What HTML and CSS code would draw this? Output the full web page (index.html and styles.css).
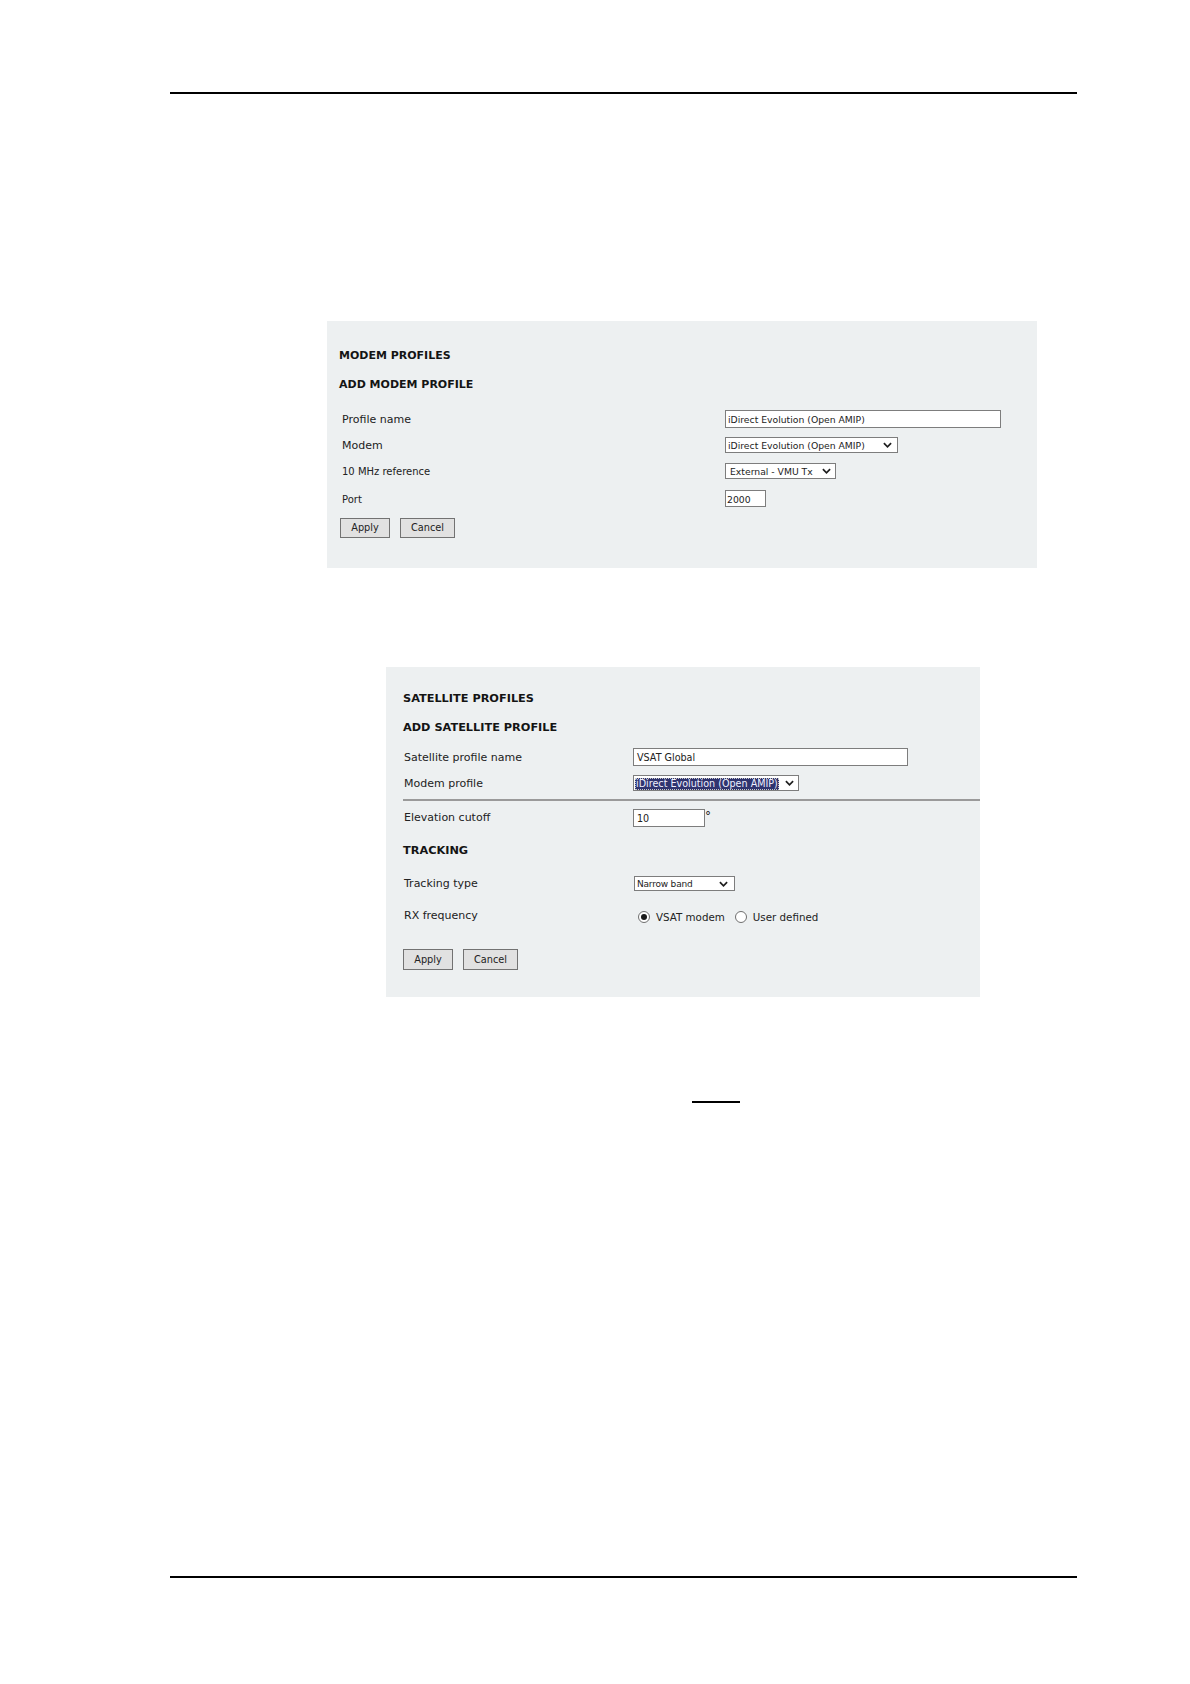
FILE: index.html
```html
<!DOCTYPE html>
<html>
<head>
<meta charset="utf-8">
<title>Modem and satellite profiles</title>
<link rel="stylesheet" href="styles.css">
</head>
<body>
<div class="page">
  <div class="rule"></div>

  <section class="panel modem">
    <h2 class="h-main">MODEM PROFILES</h2>
    <h3 class="h-sub">ADD MODEM PROFILE</h3>
    <div class="rows">
      <div class="row r1">
        <div class="label">Profile name</div>
        <div class="input w-profile">iDirect Evolution (Open AMIP)</div>
      </div>
      <div class="row r2">
        <div class="label">Modem</div>
        <div class="select w-modem"><span class="val">iDirect Evolution (Open AMIP)</span><svg class="chev" viewBox="0 0 10 6"><path d="M1 1 L5 5 L9 1"/></svg></div>
      </div>
      <div class="row r3">
        <div class="label small">10 MHz reference</div>
        <div class="select w-ref"><span class="val">External - VMU Tx</span><svg class="chev" viewBox="0 0 10 6"><path d="M1 1 L5 5 L9 1"/></svg></div>
      </div>
      <div class="row r4">
        <div class="label small">Port</div>
        <div class="input w-port">2000</div>
      </div>
    </div>
    <div class="buttons">
      <div class="btn b-apply">Apply</div>
      <div class="btn b-cancel">Cancel</div>
    </div>
  </section>

  <section class="panel sat">
    <h2 class="h-sat">SATELLITE PROFILES</h2>
    <h3 class="h-sat sub">ADD SATELLITE PROFILE</h3>
    <div class="srows">
      <div class="row s1">
        <div class="slabel">Satellite profile name</div>
        <div class="input w-satname sinput">VSAT Global</div>
      </div>
      <div class="row s1">
        <div class="slabel">Modem profile</div>
        <div class="select w-mprof"><span class="hl">iDirect Evolution (Open AMIP)</span><svg class="chev" viewBox="0 0 10 6"><path d="M1 1 L5 5 L9 1"/></svg></div>
      </div>
    </div>
    <div class="sep"></div>
    <div class="row s-elev">
      <div class="slabel">Elevation cutoff</div>
      <div class="input w-elev sinput">10</div><span class="deg">°</span>
    </div>
    <h3 class="h-sat track">TRACKING</h3>
    <div class="row s-track">
      <div class="slabel">Tracking type</div>
      <div class="select w-track"><span class="val narrow">Narrow band</span><svg class="chev" viewBox="0 0 10 6"><path d="M1 1 L5 5 L9 1"/></svg></div>
    </div>
    <div class="row s-rx">
      <div class="slabel rx">RX frequency</div>
      <div class="radios">
        <span class="radio on"></span><span class="rlabel">VSAT modem</span>
        <span class="radio"></span><span class="rlabel">User defined</span>
      </div>
    </div>
    <div class="buttons sbuttons">
      <div class="btn b-apply">Apply</div>
      <div class="btn b-cancel">Cancel</div>
    </div>
  </section>

  <div class="shortline"></div>
  <div class="rule bottom"></div>
</div>
</body>
</html>
```

FILE: styles.css
```css
* { box-sizing: border-box; }
html, body { margin: 0; padding: 0; background: #ffffff; }
body { font-family: "DejaVu Sans", Verdana, sans-serif; color: #222222; }

.page {
  width: 907px;
  margin-left: 170px;
  padding-top: 92px;
  height: 1684px;
}

.rule { height: 2px; background: #000000; }
.rule.bottom { margin-top: 473px; }

.panel { background: #edf0f1; }

/* ---------- modem panel ---------- */
.modem {
  margin-top: 227px;
  margin-left: 157px;
  width: 710px;
  height: 247px;
  padding: 28px 0 0 12px;
}
.h-main { margin: 0; font-size: 11px; line-height: 14px; font-weight: bold; color: #141414; }
.h-sub { margin: 15px 0 0 0; font-size: 11px; line-height: 14px; font-weight: bold; color: #141414; }
.rows { margin-top: 13.5px; }

.row { display: flex; align-items: center; }
.r1 { height: 26px; }
.r2 { height: 26px; }
.r3 { height: 27px; }
.r4 { height: 28px; }

.label {
  width: 386px;
  padding-left: 3px;
  padding-top: 2px;
  font-size: 11px;
  line-height: 14px;
}
.label.small { font-size: 10px; padding-top: 2px; }

.input, .select {
  background: #ffffff;
  border: 1px solid #7d7d7d;
  font-size: 9.25px;
  color: #222222;
  padding-left: 2px;
  white-space: nowrap;
  overflow: hidden;
  display: flex;
  align-items: center;
}
.input { padding-top: 1px; }
.select {
  justify-content: space-between;
  padding-right: 4px;
  padding-top: 1px;
}
.select .chev { margin-top: -1px; }
.chev { width: 9px; height: 6px; flex: none; }
.chev path { fill: none; stroke: #1e1e1e; stroke-width: 1.9; }

.w-profile { width: 276px; height: 18px; }
.w-modem { width: 173px; height: 16px; }
.w-modem .chev { margin-right: 1px; }
.w-ref { width: 111px; height: 16px; padding-left: 4px; }
.w-port { width: 41px; height: 17px; padding-left: 1px; }

.buttons { display: flex; gap: 10px; margin-top: 5.5px; margin-left: 1px; }
.btn {
  height: 20px;
  background: #e1e1e1;
  border: 1px solid #727272;
  font-size: 9.75px;
  line-height: 18px;
  text-align: center;
  color: #222222;
}
.b-apply { width: 50px; }
.b-cancel { width: 55px; }

/* ---------- satellite panel ---------- */
.sat {
  margin-top: 99px;
  margin-left: 216px;
  width: 594px;
  height: 330px;
  padding: 25px 0 0 17px;
}
.h-sat { margin: 0; font-size: 11.3px; line-height: 14px; font-weight: bold; color: #141414; }
.h-sat.sub { margin-top: 15px; }
.srows { margin-top: 9px; }
.s1 { height: 26px; }

.slabel {
  width: 230px;
  padding-left: 1px;
  padding-top: 1px;
  font-size: 11px;
  line-height: 14px;
}
.sinput { font-size: 9.6px; padding-left: 3px; }
.w-satname { width: 275px; height: 18px; }
.w-mprof { width: 166px; height: 16px; padding-left: 1px; padding-right: 4px; padding-top: 1px; }
.hl {
  background: #30346f;
  color: #eef0ff;
  font-size: 9.6px;
  line-height: 12px;
  padding: 0 1px;
  outline: 1px dotted #c9c9c9;
  outline-offset: -1px;
}

.sep { height: 2px; background: #9a9a9a; margin-top: 3px; }
.s-elev { height: 26px; margin-top: 4px; }
.s-elev .slabel { padding-top: 0; }
.w-elev { width: 72px; height: 18px; }
.deg { font-size: 12px; line-height: 10px; align-self: flex-start; margin-top: 6px; margin-left: 0; }

.h-sat.track { margin-top: 13px; }
.s-track { height: 26px; margin-top: 12.5px; }
.w-track { width: 101px; height: 15px; margin-left: 1px; padding-left: 2px; padding-right: 6px; }
.narrow { font-size: 9px; letter-spacing: -0.2px; }

.s-rx { height: 26px; margin-top: 7.5px; }
.slabel.rx { padding-top: 0; margin-top: -3px; }
.radios { display: flex; align-items: center; padding-left: 5px; }
.radio {
  width: 12px; height: 12px;
  border: 1px solid #6f6f6f;
  border-radius: 50%;
  background: #ffffff;
  display: flex; align-items: center; justify-content: center;
}
.radio.on::after {
  content: "";
  width: 6px; height: 6px;
  border-radius: 50%;
  background: #1a1a1a;
}
.rlabel { font-size: 10.3px; line-height: 14px; margin-left: 6px; margin-right: 10px; }

.sbuttons { margin-top: 19px; margin-left: 0; }
.sbuttons .btn { height: 21px; line-height: 19px; }

.shortline {
  margin-top: 104px;
  margin-left: 522px;
  width: 48px;
  height: 2px;
  background: #000000;
}
```
